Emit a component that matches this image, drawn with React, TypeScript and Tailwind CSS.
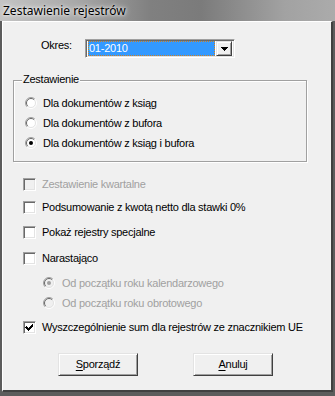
import React from 'react';

const FONT = { fontFamily: '"Liberation Sans", Arial, sans-serif' };

function Radio({ checked = false, disabled = false }: { checked?: boolean; disabled?: boolean }) {
  return (
    <svg width="12" height="12" viewBox="0 0 12 12" className="shrink-0">
      <circle cx="6" cy="6" r="5" fill={disabled ? '#f0f0f0' : '#ffffff'} />
      <path d="M2.1 9.9 A5.5 5.5 0 0 1 9.9 2.1" fill="none" stroke="#a0a0a0" strokeWidth="1" />
      <path d="M2.8 9.2 A4.5 4.5 0 0 1 9.2 2.8" fill="none" stroke="#696969" strokeWidth="1" />
      <path d="M9.9 2.1 A5.5 5.5 0 0 1 2.1 9.9" fill="none" stroke="#ffffff" strokeWidth="1" />
      <path d="M9.2 2.8 A4.5 4.5 0 0 1 2.8 9.2" fill="none" stroke="#e3e3e3" strokeWidth="1" />
      {checked && <circle cx="6" cy="6" r="2" fill={disabled ? '#a0a0a0' : '#000000'} />}
    </svg>
  );
}

function Check({ checked = false, disabled = false }: { checked?: boolean; disabled?: boolean }) {
  return (
    <div
      className={`w-[13px] h-[13px] shrink-0 border border-t-[#a0a0a0] border-l-[#a0a0a0] border-r-white border-b-white shadow-[inset_1px_1px_0_#696969,inset_-1px_-1px_0_#e3e3e3] flex items-center justify-center ${
        disabled ? 'bg-[#f0f0f0]' : 'bg-white'
      }`}
    >
      {checked && (
        <svg width="9" height="9" viewBox="0 0 9 9" shapeRendering="crispEdges">
          <path d="M1 3h1v1h1v1h1v-1h1v-1h1v-1h1v-1h1v3h-1v1h-1v1h-1v1h-1v1h-1v-1h-1v-1h-1v-1h-1z" fill="#000" />
        </svg>
      )}
    </div>
  );
}

function Row({ children, className = '' }: { children: React.ReactNode; className?: string }) {
  return <div className={`h-[20px] flex items-center ${className}`}>{children}</div>;
}

function Button({ label, accel }: { label: string; accel: string }) {
  const rest = label.slice(accel.length);
  return (
    <button className="w-[80px] h-[23px] bg-[#f0f0f0] text-[11px] text-black border border-t-[#e3e3e3] border-l-[#e3e3e3] border-r-[#404040] border-b-[#404040] shadow-[inset_1px_1px_0_#ffffff,inset_-1px_-1px_0_#a0a0a0]">
      <span className="underline underline-offset-2">{accel}</span>
      {rest}
    </button>
  );
}

export default function App() {
  return (
    <div className="w-[335px] h-[396px] bg-[#5c5c5c] flex flex-col overflow-hidden" style={FONT}>
      {/* title bar */}
      <div className="h-[21px] shrink-0 bg-[linear-gradient(90deg,#c4c4c4_0%,#a9a9a9_22%,#808080_45%,#7b7b7b_60%,#a2a2a2_85%,#ababab_100%)] flex items-center pl-[3px]">
        <span
          className="text-[12px] text-black [text-shadow:0_0_6px_#ffffff,0_0_3px_#ffffff]"
          style={{ fontFamily: '"Noto Sans", "Open Sans", sans-serif' }}
        >
          Zestawienie rejestrów
        </span>
      </div>

      {/* dialog body */}
      <div className="flex-1 ml-[2px] mr-[2px] mb-[4px] bg-[#f0f0f0] border-t border-l border-t-white border-l-white border-r-2 border-b-2 border-r-[#404040] border-b-[#404040] flex flex-col text-[11px] tracking-[-0.25px] text-black">
        {/* Okres */}
        <div className="mt-[17px] ml-[38px] h-[19px] flex items-start">
          <span className="w-[44px] leading-[13px]">Okres:</span>
          <div className="w-[150px] h-[19px] bg-white border border-t-[#a0a0a0] border-l-[#a0a0a0] border-r-white border-b-white shadow-[inset_1px_1px_0_#696969,inset_-1px_-1px_0_#e3e3e3] flex items-center pl-[2px] pr-[2px]">
            <div className="w-[128px] h-[15px] bg-[#3399ff] text-white flex items-center pl-[1px] outline outline-1 outline-dotted outline-[#d08020] -outline-offset-1">
              01-2010
            </div>
            <div className="ml-[1px] w-[16px] h-[15px] bg-[#f0f0f0] border border-t-[#e3e3e3] border-l-[#e3e3e3] border-r-[#404040] border-b-[#404040] shadow-[inset_1px_1px_0_#ffffff,inset_-1px_-1px_0_#a0a0a0] flex items-center justify-center">
              <svg width="7" height="4" viewBox="0 0 7 4" shapeRendering="crispEdges">
                <path d="M0 0h7v1h-1v1h-1v1h-1v1h-1v-1h-1v-1h-1v-1h-1z" fill="#000" />
              </svg>
            </div>
          </div>
        </div>

        {/* Zestawienie group */}
        <div className="relative mt-[22px] ml-[10px] w-[294px] h-[82px] border border-[#a0a0a0] shadow-[1px_1px_0_#ffffff,inset_1px_1px_0_#ffffff] pl-[11px] pt-[12px]">
          <span className="absolute -top-[8px] left-[8px] px-[1px] bg-[#f0f0f0] leading-[13px]">Zestawienie</span>
          <Row className="gap-[6px]">
            <Radio />
            <span>Dla dokumentów z ksiąg</span>
          </Row>
          <Row className="gap-[6px]">
            <Radio />
            <span>Dla dokumentów z bufora</span>
          </Row>
          <Row className="gap-[6px]">
            <Radio checked />
            <span>Dla dokumentów z ksiąg i bufora</span>
          </Row>
        </div>

        <Row className="mt-[12px] ml-[20px] gap-[6px]">
          <Check disabled />
          <span className="text-[#a0a0a0]">Zestawienie kwartalne</span>
        </Row>
        <Row className="mt-[3px] ml-[20px] gap-[6px]">
          <Check />
          <span>Podsumowanie z kwotą netto dla stawki 0%</span>
        </Row>
        <Row className="mt-[5px] ml-[20px] gap-[6px]">
          <Check />
          <span>Pokaż rejestry specjalne</span>
        </Row>
        <Row className="mt-[6px] ml-[20px] gap-[6px]">
          <Check />
          <span>Narastająco</span>
        </Row>
        <Row className="mt-[5px] ml-[40px] gap-[7px]">
          <Radio checked disabled />
          <span className="text-[#a0a0a0]">Od początku roku kalendarzowego</span>
        </Row>
        <Row className="ml-[40px] gap-[7px]">
          <Radio disabled />
          <span className="text-[#a0a0a0]">Od początku roku obrotowego</span>
        </Row>
        <Row className="mt-[4px] ml-[20px] gap-[6px]">
          <Check checked />
          <span>Wyszczególnienie sum dla rejestrów ze znacznikiem UE</span>
        </Row>

        <div className="mt-[16px] ml-[55px] flex gap-[55px]">
          <Button label="Sporządź" accel="S" />
          <Button label="Anuluj" accel="A" />
        </div>
      </div>
    </div>
  );
}
